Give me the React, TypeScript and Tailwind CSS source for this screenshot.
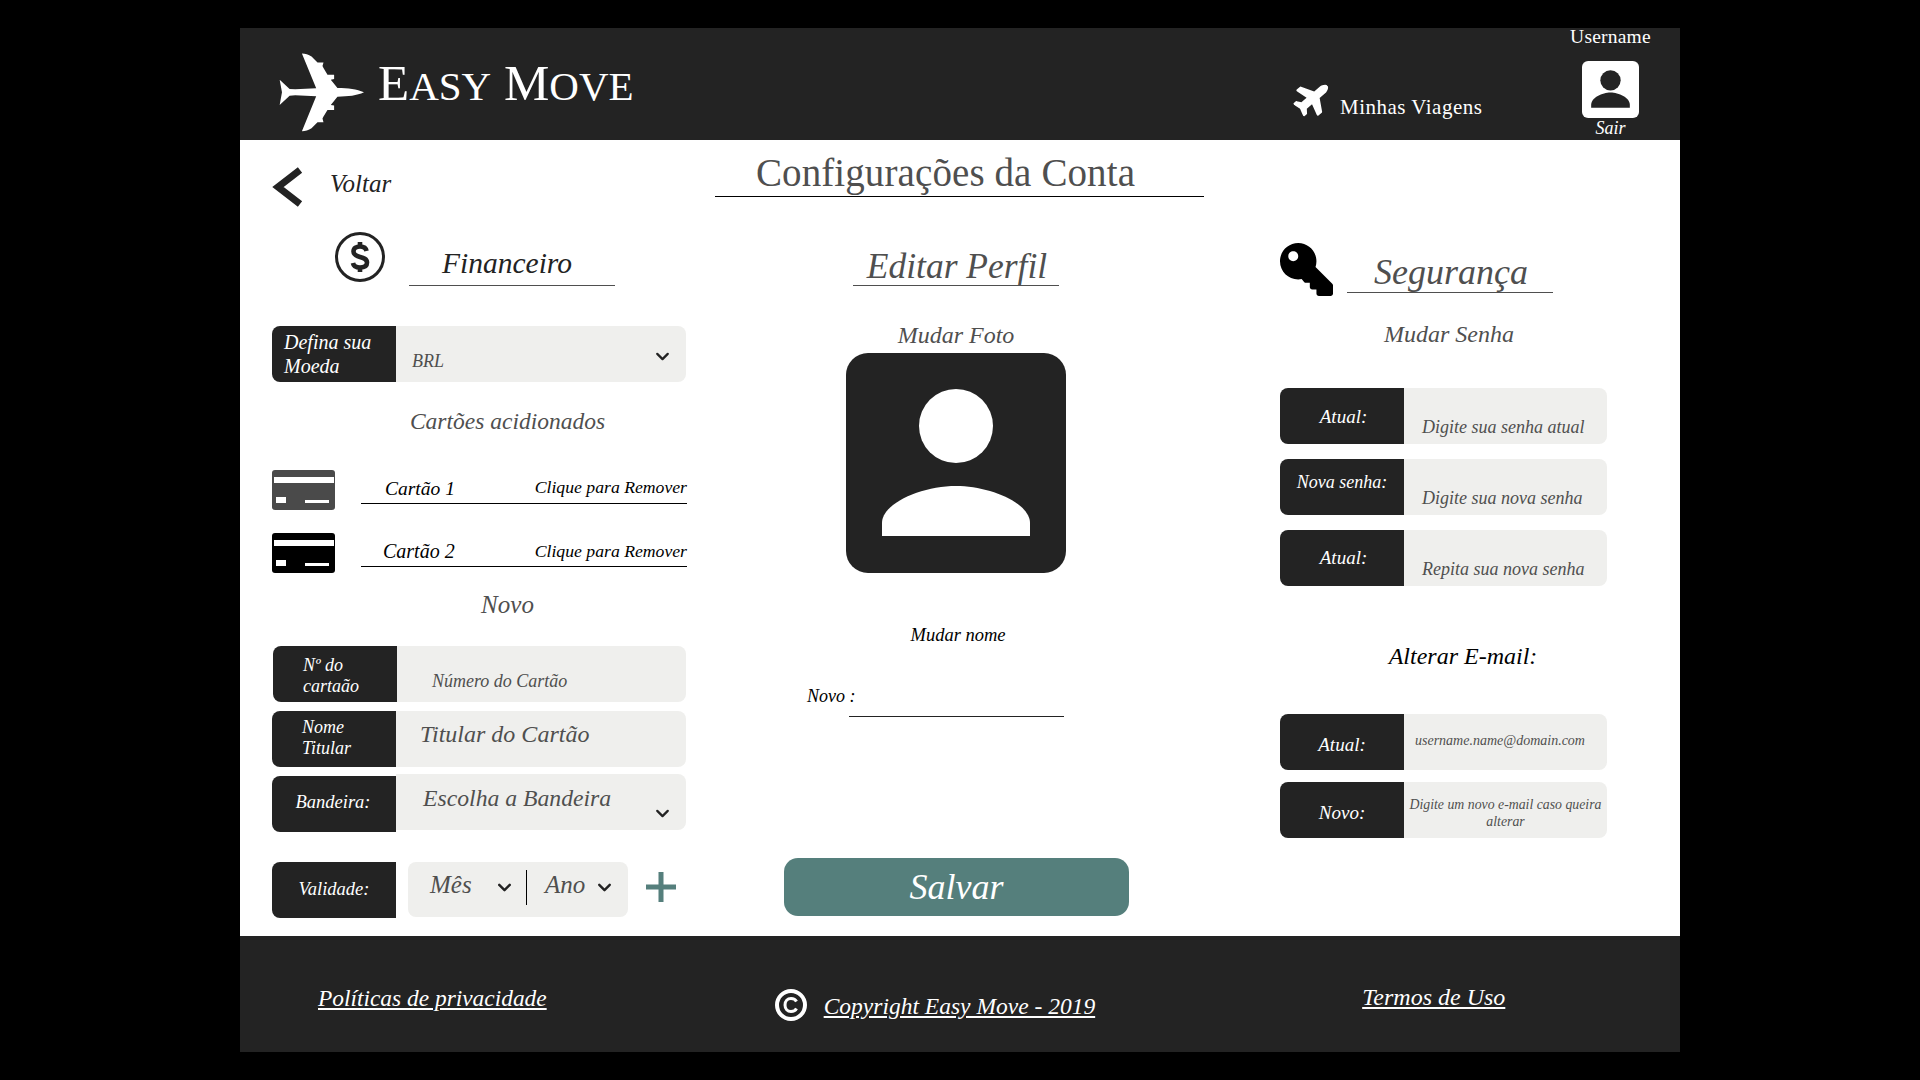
import React from 'react';
import { ChevronDown } from 'lucide-react';
import { FaPlane, FaKey } from 'react-icons/fa';

const LogoPlane = () => (
  <svg viewBox="110 95 265 240" className="w-[88px] h-[80px] fill-white">
    <path d="M372 216C350 206 325 203 292 203L272 178L282 176L282 163L262 163L250 143L247 137L250 126L232 126L214 108C205 102 195 99 185 99L228 204L165 207L148 206L118 178L125 216L118 254L148 226L165 225L228 228L185 333C195 333 205 330 214 324L232 306L250 306L247 295L250 289L262 269L282 269L282 256L272 254L292 229C325 229 350 226 372 216Z" />
  </svg>
);

const UserGlyph = ({ className }: { className: string }) => (
  <svg viewBox="0 0 220 220" className={className}>
    <rect width="220" height="220" rx="22" fill="currentColor" />
    <circle cx="110" cy="73" r="37" fill="white" />
    <path d="M36 183V170C36 150 76 133 110 133C144 133 184 150 184 170V183Z" fill="white" />
  </svg>
);

const SmallUserGlyph = () => (
  <svg viewBox="0 0 56 56" className="w-[57px] h-[57px]">
    <rect width="56" height="56" rx="6" fill="white" />
    <circle cx="28" cy="19" r="10" fill="#232323" />
    <path d="M9 46V43C9 36 20 31 28 31C36 31 47 36 47 43V46Z" fill="#232323" />
  </svg>
);

const DollarIcon = () => (
  <svg viewBox="0 0 52 52" className="w-[52px] h-[52px]" fill="none" stroke="#232323">
    <circle cx="26" cy="26" r="23.5" strokeWidth="3" />
    <path d="M32.5 20C32 17 29.5 15.5 26 15.5C22.5 15.5 19.5 17 19.5 20.5C19.5 24 22.5 25 26 26C29.5 27 33 28 33 31.5C33 35 30 36.5 26 36.5C22 36.5 19.5 35 19 32" strokeWidth="4.6" />
    <path d="M26 11V16M26 36V41" strokeWidth="4.6" />
  </svg>
);

const CardIcon = ({ color }: { color: string }) => (
  <svg viewBox="0 0 63 40" className="w-[63px] h-[40px]">
    <rect width="63" height="40" rx="3" fill={color} />
    <rect x="2" y="7" width="60" height="6" fill="white" />
    <rect x="4" y="27" width="10" height="6" fill="white" />
    <rect x="33" y="30" width="24" height="3" fill="white" />
  </svg>
);

type FieldProps = {
  label: React.ReactNode;
  value: React.ReactNode;
  labelClass: string;
  valueClass: string;
  chevron?: string;
  rootClass?: string;
};

const Field = ({ label, value, labelClass, valueClass, chevron, rootClass }: FieldProps) => (
  <div className={`flex h-[56px] ${rootClass || ''}`}>
    <div className={`w-[124px] h-full bg-[#232323] text-white italic rounded-l-[8px] ${labelClass}`}>{label}</div>
    <div className={`flex-1 h-full bg-[#efefed] text-[#4f4f4f] italic rounded-r-[8px] flex justify-between ${valueClass}`}>
      <span className="block flex-1">{value}</span>
      {chevron && <ChevronDown size={21} strokeWidth={2.6} className={`mr-[13px] text-[#232323] ${chevron}`} />}
    </div>
  </div>
);

export default function App() {
  return (
    <div className="min-h-screen h-[1080px] bg-black pt-[28px] font-['Liberation_Serif',serif] overflow-hidden">
      <div className="w-[1440px] h-[1024px] mx-auto flex flex-col bg-white">
        {/* Header */}
        <header className="h-[112px] bg-[#232323] text-white flex">
          <div className="ml-[37px] mt-[24px]">
            <LogoPlane />
          </div>
          <div className="ml-[13px] mt-[25px] w-[256px] h-[60px] text-[51px] leading-[60px] whitespace-nowrap">
            E<span className="text-[41px] uppercase">asy</span> M<span className="text-[41px] uppercase">ove</span>
          </div>
          <div className="ml-[660px] mt-[51px] flex items-start">
            <FaPlane size={38} className="-rotate-[40deg] text-white" />
            <span className="ml-[8px] mt-[16px] text-[21px] leading-[24px] tracking-[0.5px]">Minhas Viagens</span>
          </div>
          <div className="ml-[88px] flex flex-col items-center w-[80px]">
            <span className="text-[19.5px] leading-[20px] -mt-[1px] tracking-[0.2px] whitespace-nowrap">Username</span>
            <div className="mt-[14px]">
              <SmallUserGlyph />
            </div>
            <span className="italic text-[18px] leading-[20px]">Sair</span>
          </div>
        </header>

        {/* Main */}
        <main className="h-[796px] flex">
          {/* Financeiro */}
          <section className="ml-[32px] w-[415px] flex flex-col">
            <div className="mt-[27px] h-[40px] flex items-center">
              <svg viewBox="0 0 31 40" className="w-[31px] h-[40px]" fill="none" stroke="#232323" strokeWidth="7">
                <path d="M28 3L6 20L28 37" />
              </svg>
              <span className="ml-[27px] -mt-[6px] italic text-[25px] leading-[30px] text-[#232323]">Voltar</span>
            </div>
            <div className="mt-[24px] flex">
              <div className="ml-[62px]">
                <DollarIcon />
              </div>
              <h2 className="ml-[23px] w-[206px] h-[55px] pt-[14px] pl-[2px] pr-[12px] border-b border-[#4f4f4f] text-center italic text-[29.5px] leading-[36px] text-[#232323]">Financeiro</h2>
            </div>
            <Field
              rootClass="mt-[40px] w-[414px]"
              label={<>Defina sua<br />Moeda</>}
              labelClass="pl-[12px] pt-[4px] text-[20px] leading-[24px]"
              value="BRL"
              valueClass="pl-[16px] pt-[23px] text-[18px] leading-[24px]"
              chevron="mt-[-3px]"
            />
            <p className="mt-[24px] pl-[56px] text-center italic text-[23.5px] leading-[30px] text-[#4f4f4f]">Cartões acidionados</p>

            <div className="mt-[34px] flex">
              <CardIcon color="#4a4a4a" />
              <div className="ml-[26px] w-[326px] h-[34px] border-b border-black italic text-black flex justify-between">
                <span className="ml-[24px] mt-[6px] text-[19.5px] leading-[26px]">Cartão 1</span>
                <span className="mt-[6px] text-[17.7px] leading-[22px]">Clique para Remover</span>
              </div>
            </div>
            <div className="mt-[23px] flex">
              <CardIcon color="#000000" />
              <div className="ml-[26px] w-[326px] h-[34px] border-b border-black italic text-black flex justify-between">
                <span className="ml-[22px] mt-[5px] text-[20px] leading-[26px]">Cartão 2</span>
                <span className="mt-[7px] text-[17.7px] leading-[22px]">Clique para Remover</span>
              </div>
            </div>
            <p className="mt-[17px] pl-[56px] text-center italic text-[25px] leading-[30px] text-[#4f4f4f]">Novo</p>

            <Field
              rootClass="mt-[26px] ml-px w-[413px]"
              label={<>Nº do<br />cartaão</>}
              labelClass="pl-[30px] pt-[9px] text-[18px] leading-[21px]"
              value="Número do Cartão"
              valueClass="pl-[35px] pt-[23px] text-[18px] leading-[24px]"
            />
            <Field
              rootClass="mt-[9px] w-[414px]"
              label={<>Nome<br />Titular</>}
              labelClass="pl-[30px] pt-[6px] text-[18px] leading-[21px]"
              value="Titular do Cartão"
              valueClass="pl-[24px] pt-[8px] text-[24px] leading-[30px]"
            />
            <Field
              rootClass="mt-[9px] w-[414px]"
              label="Bandeira:"
              labelClass="text-center pr-[2px] pt-[14px] text-[18.5px] leading-[24px]"
              value="Escolha a Bandeira"
              valueClass="pl-[27px] pt-[9px] -mt-[2px] text-[23.7px] leading-[30px]"
              chevron="mt-[20px]"
            />
            <div className="mt-[30px] flex items-start">
              <div className="w-[124px] h-[56px] bg-[#232323] text-white italic rounded-l-[8px] text-center pt-[15px] text-[18.5px] leading-[24px]">Validade:</div>
              <div className="ml-[12px] w-[220px] h-[55px] bg-[#efefed] rounded-[8px] flex items-start italic text-[#4f4f4f] text-[25px] leading-[30px]">
                <span className="ml-[22px] mt-[8px] w-[46px]">Mês</span>
                <ChevronDown size={21} strokeWidth={2.8} className="ml-[18px] mt-[15px] text-[#232323]" />
                <span className="ml-[11px] mt-[8px] w-px h-[35px] bg-black" />
                <span className="ml-[18px] mt-[8px] w-[42px]">Ano</span>
                <ChevronDown size={21} strokeWidth={2.8} className="ml-[7px] mt-[15px] text-[#232323]" />
              </div>
              <svg viewBox="0 0 30 30" className="ml-[18px] mt-[10px] w-[30px] h-[30px]" fill="#557f7c">
                <rect x="12.5" width="5" height="30" />
                <rect y="12.5" width="30" height="5" />
              </svg>
            </div>
          </section>

          {/* Editar Perfil */}
          <section className="ml-[28px] w-[489px] flex flex-col">
            <h1 className="h-[57px] pt-[11px] pr-[28px] border-b border-black text-center text-[39px] leading-[44px] tracking-[0.1px] text-[#4f4f4f]">Configurações da Conta</h1>
            <h2 className="mt-[42px] ml-[138px] w-[206px] h-[47px] pt-[5px] pl-[2px] border-b border-[#4f4f4f] text-center italic text-[35.5px] leading-[44px] text-[#4f4f4f] whitespace-nowrap">Editar Perfil</h2>
            <p className="mt-[34px] ml-[131px] w-[220px] text-center italic text-[24px] leading-[30px] text-[#4f4f4f]">Mudar Foto</p>
            <div className="mt-[3px] ml-[131px] text-[#232323]">
              <UserGlyph className="w-[220px] h-[220px]" />
            </div>
            <p className="mt-[50px] ml-[133px] w-[220px] text-center italic text-[18.5px] leading-[24px] text-black">Mudar nome</p>
            <div className="mt-[33px] ml-[92px] flex items-start">
              <span className="mt-[4px] italic text-[18px] leading-[24px] text-black">Novo :</span>
              <span className="-ml-[7px] w-[215px] h-[37px] border-b border-[#232323]" />
            </div>
            <button className="mt-[141px] ml-[69px] w-[345px] h-[58px] rounded-[14px] bg-[#557f7c] text-white italic text-[36px] leading-[58px] text-center">Salvar</button>
          </section>

          {/* Segurança */}
          <section className="ml-[76px] w-[327px] flex flex-col">
            <div className="mt-[103px] flex">
              <FaKey size={53} className="-scale-x-100 text-black" />
              <h2 className="ml-[14px] w-[206px] h-[50px] pt-[8px] pl-[2px] border-b border-[#4f4f4f] text-center italic text-[36px] leading-[42px] text-[#4f4f4f]">Segurança</h2>
            </div>
            <p className="mt-[23px] pl-[11px] text-center italic text-[24px] leading-[30px] text-[#4f4f4f]">Mudar Senha</p>
            <Field
              rootClass="mt-[39px]"
              label="Atual:"
              labelClass="text-center pt-[17px] pl-[3px] text-[19px] leading-[24px]"
              value="Digite sua senha atual"
              valueClass="pl-[18px] pt-[27px] text-[18px] leading-[24px]"
            />
            <Field
              rootClass="mt-[15px]"
              label="Nova senha:"
              labelClass="text-center pt-[11px] text-[18px] leading-[24px]"
              value="Digite sua nova senha"
              valueClass="pl-[18px] pt-[27px] text-[18px] leading-[24px]"
            />
            <Field
              rootClass="mt-[15px]"
              label="Atual:"
              labelClass="text-center pt-[16px] pl-[3px] text-[19px] leading-[24px]"
              value="Repita sua nova senha"
              valueClass="pl-[18px] pt-[27px] text-[18px] leading-[24px]"
            />
            <p className="mt-[54px] pl-[39px] text-center italic text-[24px] leading-[32px] text-black">Alterar E-mail:</p>
            <Field
              rootClass="mt-[42px]"
              label="Atual:"
              labelClass="text-center pt-[19px] text-[19px] leading-[24px]"
              value="username.name@domain.com"
              valueClass="pl-[11px] pt-[18px] text-[14px] leading-[18px]"
            />
            <Field
              rootClass="mt-[12px]"
              label="Novo:"
              labelClass="text-center pt-[19px] text-[19px] leading-[24px]"
              value="Digite um novo e-mail caso queira alterar"
              valueClass="px-[3px] pt-[14px] text-center text-[13.8px] leading-[17px]"
            />
          </section>
        </main>

        {/* Footer */}
        <footer className="h-[116px] bg-[#232323] text-white italic flex items-start">
          <a className="ml-[78px] mt-[47px] text-[23.4px] leading-[30px] underline">Políticas de privacidade</a>
          <svg viewBox="0 0 32 32" className="ml-[228px] mt-[53px] w-[32px] h-[32px]" fill="none" stroke="white">
            <circle cx="16" cy="16" r="14" strokeWidth="4" />
            <path d="M21.5 12.5C20.5 10.5 18.5 9.5 16 9.5C12.5 9.5 10 12 10 16C10 20 12.5 22.5 16 22.5C18.5 22.5 20.5 21.5 21.5 19.5" strokeWidth="3" />
          </svg>
          <a className="ml-[17px] mt-[55px] text-[23.5px] leading-[30px] underline whitespace-nowrap">Copyright Easy Move - 2019</a>
          <a className="ml-[267px] mt-[46px] text-[24px] leading-[30px] underline">Termos de Uso</a>
        </footer>
      </div>
    </div>
  );
}
